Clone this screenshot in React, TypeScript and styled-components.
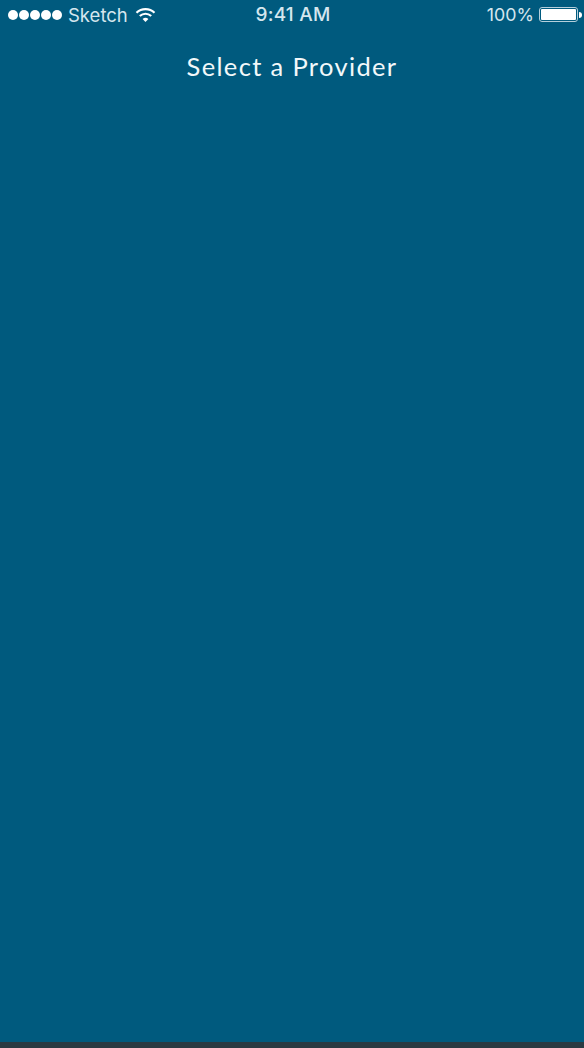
import React from "react";
import styled, { createGlobalStyle } from "styled-components";

const Global = createGlobalStyle`
  html, body { margin: 0; padding: 0; background: #005a7e; }
  #root { width: 584px; height: 1048px; }
`;

const Screen = styled.div`
  width: 584px;
  height: 1048px;
  display: flex;
  flex-direction: column;
  overflow: hidden;
  background: #005a7e;
  color: #fff;
  font-family: "Lato", "Open Sans", sans-serif;
`;

const StatusBar = styled.div`
  height: 29px;
  display: grid;
  grid-template-columns: 1fr auto 1fr;
  align-items: center;
  padding: 0 6px 0 8px;
  font-family: "Inter", "Liberation Sans", sans-serif;
  color: #d5e6ee;
`;

const Left = styled.div`
  display: flex;
  align-items: center;
`;

const Dots = styled.div`
  display: flex;
  gap: 1px;
  margin-right: 6px;
`;

const Dot = styled.span`
  width: 10px;
  height: 10px;
  border-radius: 50%;
  background: #fff;
`;

const Carrier = styled.span`
  margin-right: 7px;
  font-size: 18.5px;
  font-weight: 400;
`;

const Time = styled.div`
  font-weight: 500;
  font-size: 19px;
  letter-spacing: 0.2px;
`;

const Right = styled.div`
  display: flex;
  align-items: center;
  justify-content: flex-end;
  gap: 5px;
  font-size: 17.8px;
`;

const Battery = styled.div`
  width: 39px;
  height: 15px;
  box-sizing: border-box;
  border: 1px solid #b5cfdb;
  border-radius: 3px;
  padding: 1px;
  position: relative;
  &::after {
    content: "";
    position: absolute;
    right: -5px;
    top: 3.5px;
    width: 3px;
    height: 6px;
    border-radius: 0 3px 3px 0;
    background: #fff;
  }
`;

const BatteryFill = styled.div`
  height: 100%;
  background: #fff;
  border-radius: 1px;
`;

const Title = styled.h1`
  margin: 20px 0 0;
  height: 34px;
  line-height: 34px;
  font-size: 25.5px;
  font-weight: 400;
  letter-spacing: 1.35px;
  text-align: center;
  color: #f2f8fa;
`;

const Spacer = styled.div`
  flex: 1;
`;

const BottomEdge = styled.div`
  height: 6px;
  background: #2a3a42;
`;

const Wifi = () => (
  <svg width="21" height="16" viewBox="0 0 21 16" fill="none" stroke="#fff" strokeWidth="2.2">
    <path d="M1.5 5.8C6.5 1 14.5 1 19.5 5.8" />
    <path d="M4.8 9C8 6 13 6 16.2 9" />
    <path d="M10.5 15L7.6 11.9C9.3 10.4 11.7 10.4 13.4 11.9Z" fill="#fff" stroke="none" />
  </svg>
);

export default function App() {
  return (
    <Screen>
      <Global />
      <StatusBar>
        <Left>
          <Dots>
            {[0, 1, 2, 3, 4].map((i) => (
              <Dot key={i} />
            ))}
          </Dots>
          <Carrier>Sketch</Carrier>
          <Wifi />
        </Left>
        <Time>9:41 AM</Time>
        <Right>
          <span>100%</span>
          <Battery>
            <BatteryFill />
          </Battery>
        </Right>
      </StatusBar>
      <Title>Select a Provider</Title>
      <Spacer />
      <BottomEdge />
    </Screen>
  );
}
